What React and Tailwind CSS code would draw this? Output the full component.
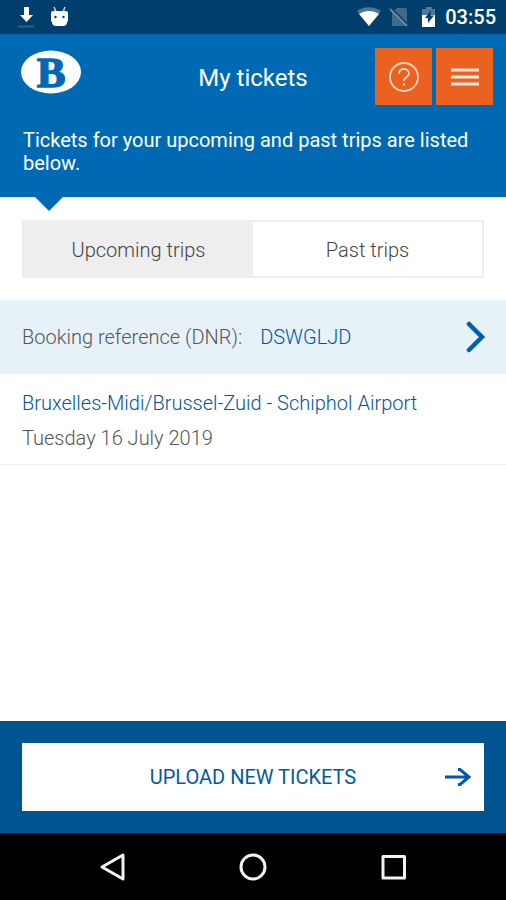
import React from 'react';

const TABS = [
    { id: 'upcoming', label: 'Upcoming trips' },
    { id: 'past', label: 'Past trips' }
];

const BOOKINGS = [
    {
        dnr: 'DSWGLJD',
        route: 'Bruxelles-Midi/Brussel-Zuid - Schiphol Airport',
        date: 'Tuesday 16 July 2019'
    }
];

const StatusBar = () => (
    <div className="flex h-[34px] items-center justify-between bg-[#003e6b] pl-4 pr-[10px] text-white">
        <div className="flex items-center gap-[14px]">
            <svg width="20" height="24" viewBox="0 0 20 24">
                <path d="M8 2h5v8h4l-6.500 7L4 10h4z" fill="#fff" />
                <path d="M2 21.500h16" stroke="#2f6285" strokeWidth="2" />
            </svg>
            {/* Android head */}
            <svg width="20" height="24" viewBox="0 0 20 24">
                <path d="M4 2l2 5M15 2l-2 5" stroke="#c9d8e2" strokeWidth="1.500" />
                <path d="M1 8a2 2 0 0 1 2-2h13a2 2 0 0 1 2 2v8l-1 1a4 4 0 0 1-4 4H6a4 4 0 0 1-4-4l-1-1z" fill="#fff" />
                <circle cx="5.500" cy="12" r="1.200" fill="#003e6b" />
                <circle cx="13.500" cy="12" r="1.200" fill="#003e6b" />
            </svg>
        </div>
        <div className="flex items-center gap-2">
            <svg width="24" height="20" viewBox="0 0 24 20">
                <path d="M0 4C7-1 17-1 24 4L12 19z" fill="#4d7895" />
                <path d="M2 7C8 3 16 3 22 7L12 19z" fill="#fff" />
            </svg>
            <svg width="20" height="20" viewBox="0 0 20 20">
                <path d="M8 1h8a2 2 0 0 1 2 2v16H3V6z" fill="#3f6a89" />
                <path d="M2 1l17 17" stroke="#003e6b" strokeWidth="2" />
                <path d="M1 2l17 17" stroke="#688ba3" strokeWidth="1.800" />
            </svg>
            <svg width="16" height="22" viewBox="0 0 16 22" className="ml-1">
                <path d="M5 1h6v2h3v7H1V3h4z" fill="#4d7895" />
                <path d="M1 9h13v12H1z" fill="#fff" />
                <path d="M10 4L4 12h3v5l6-7.500H9.500z" fill="#003e6b" />
            </svg>
            <span className="text-xl font-medium leading-6">03:55</span>
        </div>
    </div>
);

const Logo = () => (
    <svg width="62" height="50" viewBox="0 0 62 50" role="img" aria-label="B">
        <ellipse cx="31" cy="24" rx="30" ry="21.500" fill="#fff" />
        <text
            x="31"
            y="38.500"
            fontSize="43"
            textAnchor="middle"
            fill="#0069b4"
            stroke="#0069b4"
            strokeWidth="1.500"
            strokeLinejoin="round"
            className="font-['Liberation_Serif',serif] font-bold"
        >
            B
        </text>
    </svg>
);

const Header = () => (
    <header className="bg-[#0069b4] pb-[22px] text-white">
        <div className="grid grid-cols-[1fr_auto_1fr] items-start px-[13px] pt-[14px]">
            <div className="pl-[7px]">
                <Logo />
            </div>
            <h1 className="pt-[14px] text-2xl leading-8">My tickets</h1>
            <div className="flex justify-end gap-1">
                <button type="button" aria-label="Help" className="flex h-[57px] w-[57px] items-center justify-center bg-[#eb6120]">
                    <svg width="32" height="32" viewBox="0 0 32 32" fill="none" stroke="#ffd9c2" strokeWidth="1.800">
                        <circle cx="16" cy="16" r="14" />
                        <path d="M11 13c0-3 2-5 5-5s5 2 5 4.500c0 3.500-5 3.500-5 7.500" />
                        <path d="M16 22v2.500" strokeWidth="2.200" />
                    </svg>
                </button>
                <button type="button" aria-label="Menu" className="flex h-[57px] w-[57px] items-center justify-center bg-[#eb6120]">
                    <svg width="28" height="20" viewBox="0 0 28 20" stroke="#ffe9dc" strokeWidth="3">
                        <path d="M0 3h28M0 10h28M0 17h28" />
                    </svg>
                </button>
            </div>
        </div>
        <p className="px-[23px] pt-6 text-xl leading-[23px]">
            Tickets for your upcoming and past trips are listed below.
        </p>
    </header>
);

const Tabs = ({ active, onSelect }) => (
    <div className="mx-[22px] mt-[9px] flex border-2 border-[#eeeeee]">
        {TABS.map((tab) => (
            <button
                key={tab.id}
                type="button"
                aria-pressed={tab.id === active}
                onClick={() => onSelect(tab.id)}
                className={`h-[54px] flex-1 pt-[2px] text-xl font-light text-[#444444] ${tab.id === active ? 'bg-[#eeeeee]' : 'bg-white'}`}
            >
                {tab.label}
            </button>
        ))}
    </div>
);

const Booking = ({ booking }) => (
    <article className="border-b border-[#eeeeee] text-xl font-light">
        <a href="#booking" className="flex h-[74px] items-center bg-[#e7f2f8] pl-[22px] pr-5">
            <span className="text-[#555555]">Booking reference (DNR):</span>
            <span className="ml-[18px] flex-1 text-[#0054a6]">{booking.dnr}</span>
            <svg width="20" height="32" viewBox="0 0 20 32" fill="none" stroke="#0060ad" strokeWidth="4.500" strokeLinecap="round">
                <path d="M3 3l13 13L3 29" />
            </svg>
        </a>
        <div className="px-[22px] pb-2 pt-3 leading-[35px]">
            <p className="text-[#0054a6]">{booking.route}</p>
            <p className="text-[#555555]">{booking.date}</p>
        </div>
    </article>
);

const NavBar = () => (
    <nav className="flex h-[67px] items-center justify-center gap-[112px] bg-black">
        <button type="button" aria-label="Back">
            <svg width="28" height="30" viewBox="0 0 28 30" fill="none" stroke="#f2f2f2" strokeWidth="3" strokeLinejoin="round">
                <path d="M24 3v24L3 15z" />
            </svg>
        </button>
        <button type="button" aria-label="Home">
            <svg width="28" height="28" viewBox="0 0 28 28" fill="none" stroke="#f2f2f2" strokeWidth="3">
                <circle cx="14" cy="14" r="12" />
            </svg>
        </button>
        <button type="button" aria-label="Recent apps">
            <svg width="28" height="28" viewBox="0 0 28 28" fill="none" stroke="#f2f2f2" strokeWidth="3" strokeLinejoin="round">
                <path d="M4 3.500h21.500v21.500H4z" />
            </svg>
        </button>
    </nav>
);

const App = () => {
    const [activeTab, setActiveTab] = React.useState('upcoming');

    return (
        <div className="flex min-h-screen flex-col bg-white font-['Roboto',sans-serif]">
            <StatusBar />
            <Header />
            {/* Pointer under the header */}
            <svg width="28" height="14" viewBox="0 0 28 14" className="ml-[35px]">
                <path d="M0 0h28L14 14z" fill="#0069b4" />
            </svg>

            <main className="flex flex-1 flex-col">
                <Tabs active={activeTab} onSelect={setActiveTab} />
                <section className="mt-[22px]">
                    {activeTab === 'upcoming' && BOOKINGS.map((booking) => (
                        <Booking key={booking.dnr} booking={booking} />
                    ))}
                </section>
            </main>

            <footer className="bg-[#005590] px-[22px] py-[22px]">
                <button type="button" className="grid h-[68px] w-full grid-cols-[1fr_auto_1fr] items-center bg-white px-3 text-xl text-[#0059a8]">
                    <span className="col-start-2">UPLOAD NEW TICKETS</span>
                    <svg width="28" height="20" viewBox="0 0 28 20" fill="none" stroke="#0059a8" strokeWidth="3" className="justify-self-end">
                        <path d="M1 10h24M14 2.500h2l9 7.500-9 7.500h-2" />
                    </svg>
                </button>
            </footer>
            <NavBar />
        </div>
    );
};

export default App;
